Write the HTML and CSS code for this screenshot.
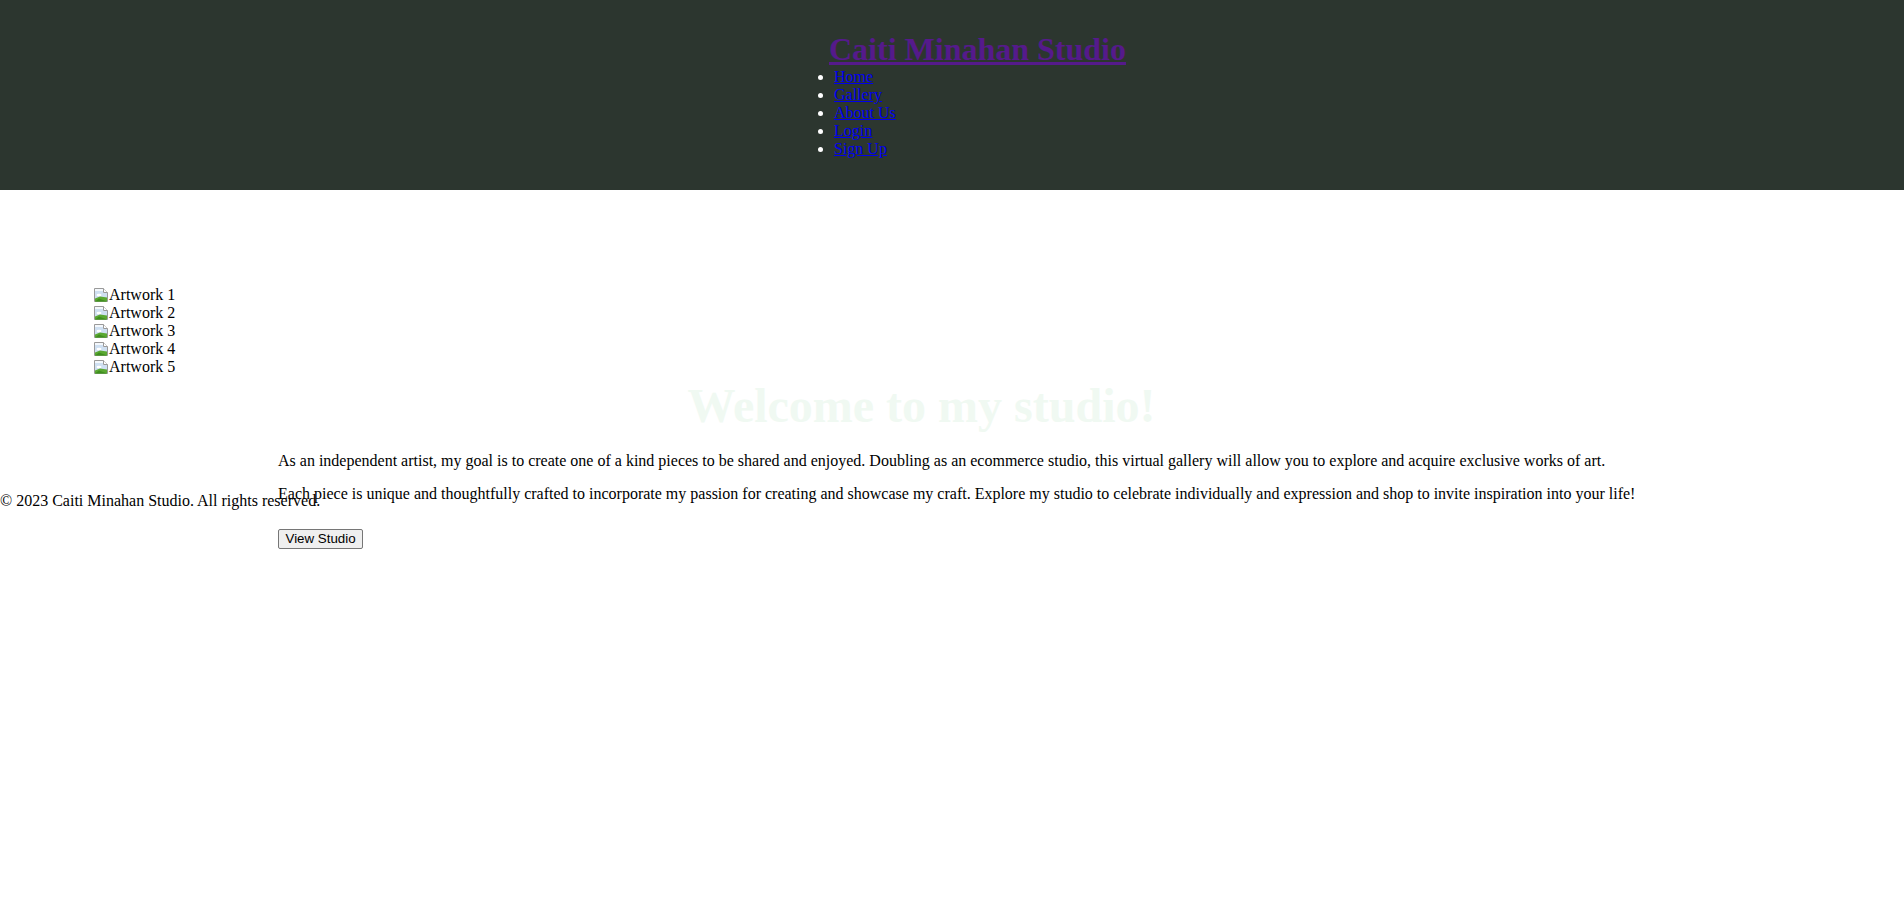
FILE: index.html
```html
<!DOCTYPE html>
<html lang="en">
<head>
<meta charset="utf-8">
<title>Caiti Minahan Studio</title>
<link rel="stylesheet" href="styles.css">
</head>
<body>
<header class="site-header">
  <div class="header-inner">
    <h1 class="brand"><a class="brand-link" href="#">Caiti Minahan Studio</a></h1>
    <nav>
      <ul class="nav-list">
        <li><a class="nav-link" href="#">Home</a></li>
        <li><a class="nav-link" href="#">Gallery</a></li>
        <li><a class="nav-link" href="#">About Us</a></li>
        <li><a class="nav-link" href="#">Login</a></li>
        <li><a class="nav-link" href="#">Sign Up</a></li>
      </ul>
    </nav>
  </div>
</header>
<main class="main">
  <div class="carousel">
    <div class="art"><svg class="broken" width="16" height="16" viewBox="0 0 16 16"><path d="M1.5 1.5h9l4 4v9h-13z" fill="#f4f8fc" stroke="#9a9a9a"/><path d="M10.5 1.5v4h4" fill="#fff" stroke="#9a9a9a"/><path d="M2 4h8v2h4v8H2z" fill="#cfe0f2"/><ellipse cx="6" cy="8" rx="2.5" ry="1.3" fill="#fff"/><path d="M2 14.5v-3l5-2 7 1v4z" fill="#5aa832"/><path d="M2 14.5l4-3 8 3z" fill="#3f8f1f"/></svg>Artwork 1</div>
    <div class="art"><svg class="broken" width="16" height="16" viewBox="0 0 16 16"><path d="M1.5 1.5h9l4 4v9h-13z" fill="#f4f8fc" stroke="#9a9a9a"/><path d="M10.5 1.5v4h4" fill="#fff" stroke="#9a9a9a"/><path d="M2 4h8v2h4v8H2z" fill="#cfe0f2"/><ellipse cx="6" cy="8" rx="2.5" ry="1.3" fill="#fff"/><path d="M2 14.5v-3l5-2 7 1v4z" fill="#5aa832"/><path d="M2 14.5l4-3 8 3z" fill="#3f8f1f"/></svg>Artwork 2</div>
    <div class="art"><svg class="broken" width="16" height="16" viewBox="0 0 16 16"><path d="M1.5 1.5h9l4 4v9h-13z" fill="#f4f8fc" stroke="#9a9a9a"/><path d="M10.5 1.5v4h4" fill="#fff" stroke="#9a9a9a"/><path d="M2 4h8v2h4v8H2z" fill="#cfe0f2"/><ellipse cx="6" cy="8" rx="2.5" ry="1.3" fill="#fff"/><path d="M2 14.5v-3l5-2 7 1v4z" fill="#5aa832"/><path d="M2 14.5l4-3 8 3z" fill="#3f8f1f"/></svg>Artwork 3</div>
    <div class="art"><svg class="broken" width="16" height="16" viewBox="0 0 16 16"><path d="M1.5 1.5h9l4 4v9h-13z" fill="#f4f8fc" stroke="#9a9a9a"/><path d="M10.5 1.5v4h4" fill="#fff" stroke="#9a9a9a"/><path d="M2 4h8v2h4v8H2z" fill="#cfe0f2"/><ellipse cx="6" cy="8" rx="2.5" ry="1.3" fill="#fff"/><path d="M2 14.5v-3l5-2 7 1v4z" fill="#5aa832"/><path d="M2 14.5l4-3 8 3z" fill="#3f8f1f"/></svg>Artwork 4</div>
    <div class="art"><svg class="broken" width="16" height="16" viewBox="0 0 16 16"><path d="M1.5 1.5h9l4 4v9h-13z" fill="#f4f8fc" stroke="#9a9a9a"/><path d="M10.5 1.5v4h4" fill="#fff" stroke="#9a9a9a"/><path d="M2 4h8v2h4v8H2z" fill="#cfe0f2"/><ellipse cx="6" cy="8" rx="2.5" ry="1.3" fill="#fff"/><path d="M2 14.5v-3l5-2 7 1v4z" fill="#5aa832"/><path d="M2 14.5l4-3 8 3z" fill="#3f8f1f"/></svg>Artwork 5</div>
  </div>
  <section class="welcome">
    <h2 class="welcome-title">Welcome to my studio!</h2>
    <p class="welcome-text">As an independent artist, my goal is to create one of a kind pieces to be shared and enjoyed. Doubling as an ecommerce studio, this virtual gallery will allow you to explore and acquire exclusive works of art.</p>
    <p class="welcome-text">Each piece is unique and thoughtfully crafted to incorporate my passion for creating and showcase my craft. Explore my studio to celebrate individually and expression and shop to invite inspiration into your life!</p>
    <div class="actions"><button class="studio-btn" type="button">View Studio</button></div>
  </section>
</main>
<footer class="site-footer">
  <p class="copyright">© 2023 Caiti Minahan Studio. All rights reserved.</p>
</footer>
</body>
</html>
```
FILE: styles.css
```css
html, body {
  margin: 0;
  padding: 0;
}

html {
  min-height: 100%;
}

body {
  min-height: 100vh;
  font-family: "Liberation Serif", "Times New Roman", serif;
  font-size: 16px;
  color: #000000;
  background: #ffffff;
}

.site-header {
  box-sizing: border-box;
  height: 190px;
  padding-top: 32px;
  background: #2c362f;
  color: #ffffff;
}

.header-inner {
  width: 316px;
  margin: 0 auto;
}

.brand {
  margin: 0 0 2px 35px;
  font-size: 32px;
  line-height: 34px;
  font-weight: bold;
  white-space: nowrap;
}

.brand-link {
  color: #551a8b;
  text-decoration: underline;
}

.nav-list {
  margin: 0;
  padding-left: 40px;
  list-style: disc;
  color: #ffffff;
}

.nav-list li {
  line-height: 18px;
}

.nav-link {
  color: #0000ee;
  text-decoration: underline;
}

.main {
  height: 302px;
  padding-top: 96px;
  box-sizing: border-box;
}

.carousel {
  padding-left: 93px;
}

.art {
  height: 18px;
  display: flex;
  align-items: center;
  white-space: nowrap;
  line-height: 18px;
}

.broken {
  display: block;
  flex: none;
}

.welcome {
  padding-left: 278px;
}

.welcome-title {
  width: 1287px;
  margin: 2px 0 19px;
  text-align: center;
  font-size: 48px;
  font-weight: bold;
  color: #f0f9f2;
}

.welcome-text {
  margin: 15px 0;
  white-space: nowrap;
}

.welcome-text:first-of-type {
  margin-top: 0;
}

.actions {
  margin-top: 26px;
  display: flex;
}

.studio-btn {
  box-sizing: border-box;
  height: 20px;
  padding: 0 6.5px;
  font-family: "Liberation Sans", Arial, sans-serif;
  font-size: 13.333px;
  line-height: 16px;
  background: #efefef;
  border: 1px solid #767676;
  border-radius: 2px;
  color: #000000;
}

.copyright {
  margin: 0;
  line-height: 18px;
}
```
